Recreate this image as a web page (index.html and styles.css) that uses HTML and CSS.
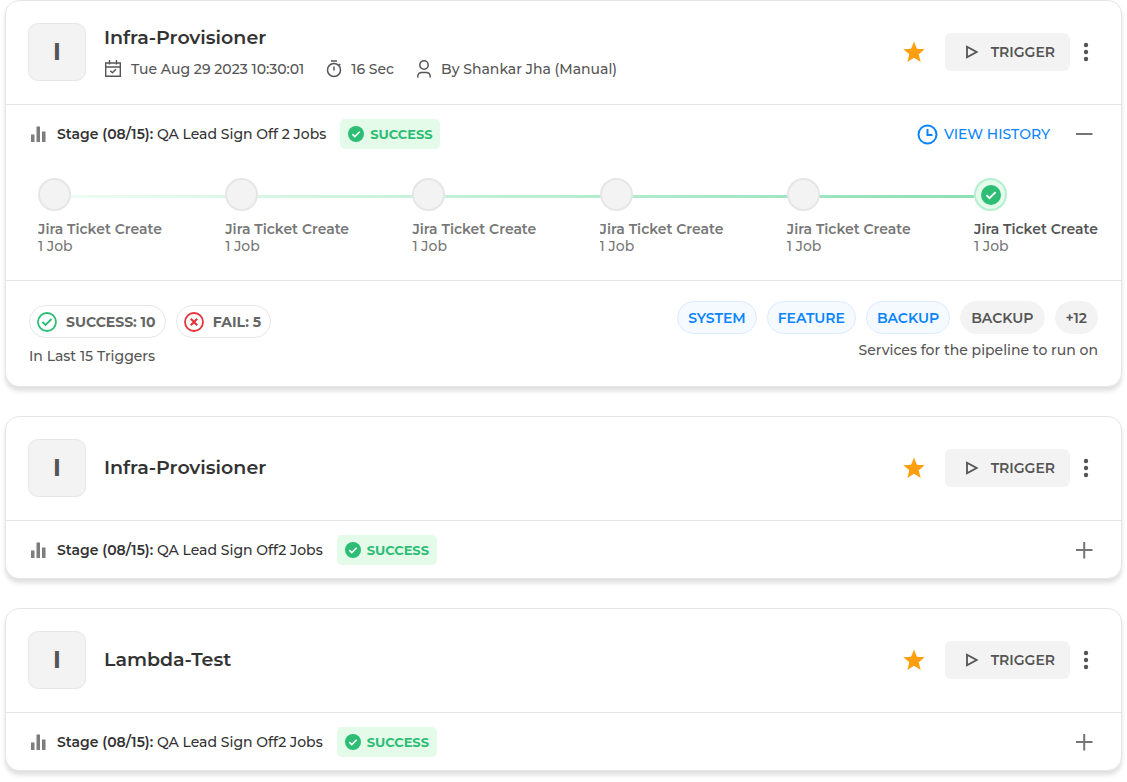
FILE: index.html
```html
<!DOCTYPE html>
<html lang="en">
<head>
    <meta charset="UTF-8">
    <meta name="viewport" content="width=device-width, initial-scale=1.0">
    <title>Pipelines</title>
    <link rel="stylesheet" href="styles.css">
</head>
<body>
    <!-- shared icons -->
    <svg class="sprite" aria-hidden="true">
        <symbol id="icon-star" viewBox="0 0 22 22">
            <path fill="#ff9f0f" d="M11 0.5l2.9 7.3 7.8.5-6 5 2 7.7-6.700-4.200-6.700 4.200 2-7.700-6-5 7.800-.5z"/>
        </symbol>
        <symbol id="icon-play" viewBox="0 0 14 14">
            <path fill="none" stroke="currentColor" stroke-width="1.8" d="M2 1.700v10.600L11.700 7z"/>
        </symbol>
        <symbol id="icon-dots" viewBox="0 0 6 20">
            <circle cx="3" cy="3" r="2.200" fill="currentColor"/>
            <circle cx="3" cy="10" r="2.200" fill="currentColor"/>
            <circle cx="3" cy="17" r="2.200" fill="currentColor"/>
        </symbol>
        <symbol id="icon-bars" viewBox="0 0 16 16">
            <path fill="#7d7d7d" d="M0 8.500h3.500V16H0zM5.500.5H9V16H5.500zM11 5.500h3.500V16H11z"/>
        </symbol>
        <symbol id="icon-check" viewBox="0 0 16 16">
            <circle cx="8" cy="8" r="8" fill="#2dbd75"/>
            <path fill="none" stroke="#fff" stroke-width="1.500" d="M4.300 8.100l2.500 2.500 4.900-4.900"/>
        </symbol>
        <symbol id="icon-plus" viewBox="0 0 18 18">
            <path stroke="#757575" stroke-width="2" d="M1 9h16.500M9.200 1v16.500"/>
        </symbol>
        <symbol id="icon-minus" viewBox="0 0 18 18">
            <path stroke="#757575" stroke-width="2" d="M1 9h16.500"/>
        </symbol>
    </svg>

    <main class="pipelines">
        <article class="card">
            <header class="card-head">
                <div class="avatar">I</div>
                <div class="card-info">
                    <h2>Infra-Provisioner</h2>
                    <ul class="meta">
                        <li>
                            <svg width="18" height="18" viewBox="0 0 18 18" fill="none" stroke="#555" stroke-width="1.400"><path d="M1.700 3h14.600v13.300H1.700zM1.700 7h14.600M5.500 0v4.500M12.500 0v4.500M6.300 10.700l2.100 2 3.500-3.500"/></svg>
                            <span>Tue Aug 29 2023 10:30:01</span>
                        </li>
                        <li>
                            <svg width="16" height="18" viewBox="0 0 16 18" fill="none" stroke="#555" stroke-width="1.500"><circle cx="8" cy="10" r="6.500"/><path d="M5 1h6M8 6.500v4M13 4l1.300 1.300"/></svg>
                            <span>16 Sec</span>
                        </li>
                        <li>
                            <svg width="16" height="18" viewBox="0 0 16 18" fill="none" stroke="#555" stroke-width="1.500"><circle cx="8" cy="5" r="4.200"/><path d="M1.800 17.500v-1.300a3.700 3.700 0 0 1 3.700-3.700h5a3.700 3.700 0 0 1 3.700 3.700v1.300"/></svg>
                            <span>By Shankar Jha (Manual)</span>
                        </li>
                    </ul>
                </div>
                <div class="actions">
                    <button class="icon-btn" aria-label="Favourite"><svg width="22" height="22"><use href="#icon-star"/></svg></button>
                    <button class="trigger"><svg width="14" height="14"><use href="#icon-play"/></svg>TRIGGER</button>
                    <button class="icon-btn" aria-label="More"><svg width="6" height="20"><use href="#icon-dots"/></svg></button>
                </div>
            </header>

            <div class="stage">
                <svg width="16" height="16"><use href="#icon-bars"/></svg>
                <p><b>Stage (08/15):</b> QA Lead Sign Off 2 Jobs</p>
                <span class="badge"><svg width="16" height="16"><use href="#icon-check"/></svg>SUCCESS</span>
                <div class="stage-actions">
                    <a href="#" class="history">
                        <svg width="21" height="21" viewBox="0 0 21 21" fill="none" stroke="#0a84ff" stroke-width="2"><circle cx="10.500" cy="10.500" r="9"/><path d="M10.500 5v6h5"/></svg>
                        VIEW HISTORY
                    </a>
                    <button class="icon-btn" aria-label="Collapse"><svg width="18" height="18"><use href="#icon-minus"/></svg></button>
                </div>
            </div>

            <ol class="steps">
                <li><span class="dot"></span><b>Jira Ticket Create</b>1 Job</li>
                <li><span class="dot"></span><b>Jira Ticket Create</b>1 Job</li>
                <li><span class="dot"></span><b>Jira Ticket Create</b>1 Job</li>
                <li><span class="dot"></span><b>Jira Ticket Create</b>1 Job</li>
                <li><span class="dot"></span><b>Jira Ticket Create</b>1 Job</li>
                <li class="done"><span class="dot"><svg width="20" height="20"><use href="#icon-check"/></svg></span><b>Jira Ticket Create</b>1 Job</li>
            </ol>

            <footer class="card-foot">
                <div class="results">
                    <div class="pills">
                        <span class="pill">
                            <svg width="20" height="20" viewBox="0 0 20 20" fill="none" stroke="#2dbd75" stroke-width="1.800"><circle cx="10" cy="10" r="9"/><path d="M5.500 10l3 3 6-6"/></svg>
                            SUCCESS: 10
                        </span>
                        <span class="pill">
                            <svg width="20" height="20" viewBox="0 0 20 20" fill="none" stroke="#e5353a" stroke-width="1.800"><circle cx="10" cy="10" r="9"/><path stroke-width="2.200" d="M6.800 6.800l6.400 6.400M13.200 6.800l-6.400 6.400"/></svg>
                            FAIL: 5
                        </span>
                    </div>
                    <p>In Last 15 Triggers</p>
                </div>
                <div class="services">
                    <div class="tags">
                        <span class="tag blue">SYSTEM</span>
                        <span class="tag blue">FEATURE</span>
                        <span class="tag blue">BACKUP</span>
                        <span class="tag">BACKUP</span>
                        <span class="tag">+12</span>
                    </div>
                    <p>Services for the pipeline to run on</p>
                </div>
            </footer>
        </article>

        <article class="card">
            <header class="card-head">
                <div class="avatar">I</div>
                <div class="card-info">
                    <h2>Infra-Provisioner</h2>
                </div>
                <div class="actions">
                    <button class="icon-btn" aria-label="Favourite"><svg width="22" height="22"><use href="#icon-star"/></svg></button>
                    <button class="trigger"><svg width="14" height="14"><use href="#icon-play"/></svg>TRIGGER</button>
                    <button class="icon-btn" aria-label="More"><svg width="6" height="20"><use href="#icon-dots"/></svg></button>
                </div>
            </header>
            <div class="stage">
                <svg width="16" height="16"><use href="#icon-bars"/></svg>
                <p><b>Stage (08/15):</b> QA Lead Sign Off2 Jobs</p>
                <span class="badge"><svg width="16" height="16"><use href="#icon-check"/></svg>SUCCESS</span>
                <div class="stage-actions">
                    <button class="icon-btn" aria-label="Expand"><svg width="18" height="18"><use href="#icon-plus"/></svg></button>
                </div>
            </div>
        </article>

        <article class="card">
            <header class="card-head">
                <div class="avatar">I</div>
                <div class="card-info">
                    <h2>Lambda-Test</h2>
                </div>
                <div class="actions">
                    <button class="icon-btn" aria-label="Favourite"><svg width="22" height="22"><use href="#icon-star"/></svg></button>
                    <button class="trigger"><svg width="14" height="14"><use href="#icon-play"/></svg>TRIGGER</button>
                    <button class="icon-btn" aria-label="More"><svg width="6" height="20"><use href="#icon-dots"/></svg></button>
                </div>
            </header>
            <div class="stage">
                <svg width="16" height="16"><use href="#icon-bars"/></svg>
                <p><b>Stage (08/15):</b> QA Lead Sign Off2 Jobs</p>
                <span class="badge"><svg width="16" height="16"><use href="#icon-check"/></svg>SUCCESS</span>
                <div class="stage-actions">
                    <button class="icon-btn" aria-label="Expand"><svg width="18" height="18"><use href="#icon-plus"/></svg></button>
                </div>
            </div>
        </article>
    </main>
</body>
</html>
```
FILE: styles.css
```css
:root {
    --border: #e6e6e6;
    --text: #333333;
    --text-soft: #555555;
    --text-muted: #777777;
    --grey-bg: #f3f3f3;
    --blue: #0a84ff;
    --green: #2dbd75;
    --green-bg: #e4fbea;
}

* {
    box-sizing: border-box;
}

body {
    margin: 0;
    background: #ffffff;
    color: var(--text);
    font-family: Montserrat, Inter, sans-serif;
    font-size: 14px;
    font-weight: 500;
    line-height: 20px;
}

h2, p, ul, ol {
    margin: 0;
    padding: 0;
    list-style: none;
}

b {
    font-weight: 600;
}

svg {
    display: block;
    flex: none;
}

button {
    border: none;
    padding: 0;
    background: none;
    color: var(--text-soft);
    font: inherit;
    cursor: pointer;
}

.sprite {
    display: none;
}

.pipelines {
    display: flex;
    flex-direction: column;
    gap: 29px;
    padding: 0 5px 8px;
}

.card {
    border: 1px solid var(--border);
    border-radius: 14px;
    background: #ffffff;
    box-shadow: 0 4px 4px rgba(0, 0, 0, 0.13);
}

/* header */
.card-head {
    display: flex;
    align-items: center;
    gap: 18px;
    padding: 22px 32px 23px 22px;
    border-bottom: 1px solid var(--border);
}

.avatar {
    display: flex;
    align-items: center;
    justify-content: center;
    width: 58px;
    height: 58px;
    border: 1px solid var(--border);
    border-radius: 10px;
    background: var(--grey-bg);
    color: var(--text-soft);
    font-size: 24px;
    font-weight: 700;
}

.card-info {
    display: flex;
    flex-direction: column;
    gap: 9px;
}

h2 {
    font-size: 19px;
    font-weight: 600;
    line-height: 24px;
}

.meta {
    display: flex;
    gap: 22px;
    color: var(--text-soft);
}

.meta li {
    display: flex;
    align-items: center;
    gap: 9px;
}

.actions {
    display: flex;
    align-items: center;
    margin-left: auto;
}

.icon-btn {
    display: flex;
}

.trigger {
    display: flex;
    align-items: center;
    justify-content: flex-end;
    gap: 12px;
    width: 125px;
    height: 38px;
    margin: 0 13px 0 20px;
    padding-right: 15px;
    border-radius: 6px;
    background: var(--grey-bg);
    font-weight: 600;
}

/* stage row */
.stage {
    display: flex;
    align-items: center;
    gap: 10px;
    padding: 14px 28px 13px 25px;
}

.badge {
    display: flex;
    align-items: center;
    gap: 6px;
    height: 30px;
    margin-left: 4px;
    padding: 0 8px;
    border-radius: 5px;
    background: var(--green-bg);
    color: var(--green);
    font-size: 13px;
    font-weight: 700;
}

.stage-actions {
    display: flex;
    align-items: center;
    gap: 25px;
    margin-left: auto;
}

.history {
    display: flex;
    align-items: center;
    gap: 6px;
    color: var(--blue);
    text-decoration: none;
}

/* steps, the track runs behind the dots */
.steps {
    display: flex;
    margin: 16px 22px 25px 32px;
    background: linear-gradient(90deg, #f0fdf4, #8be0b4) no-repeat 0 17px / calc(100% - 125px) 3px;
    color: var(--text-muted);
    line-height: 17px;
}

.steps li {
    flex: 1;
    overflow: hidden;
    white-space: nowrap;
}

.steps b {
    display: block;
}

.steps .done {
    flex: 0 0 125px;
}

.dot {
    display: flex;
    align-items: center;
    justify-content: center;
    width: 33px;
    height: 33px;
    margin-bottom: 10px;
    border: 2px solid var(--border);
    border-radius: 50%;
    background: var(--grey-bg);
}

.done .dot {
    border-color: #b5efd0;
    background: var(--green-bg);
}

.done b {
    color: var(--text-soft);
}

/* footer */
.card-foot {
    display: flex;
    justify-content: space-between;
    padding: 20px 23px;
    border-top: 1px solid var(--border);
    color: var(--text-soft);
}

.results {
    padding-top: 4px;
}

.pills,
.tags {
    display: flex;
    gap: 10px;
}

.pill,
.tag {
    display: flex;
    align-items: center;
    height: 33px;
    border-radius: 17px;
    font-weight: 600;
}

.pill {
    gap: 9px;
    padding: 0 9px 0 7px;
    border: 1px solid var(--border);
    color: #666666;
    font-weight: 700;
}

.results p {
    margin-top: 8px;
}

.tag {
    padding: 0 10px;
    border: 1px solid var(--grey-bg);
    background: var(--grey-bg);
}

.tag.blue {
    border-color: #dcebff;
    background: #f4faff;
    color: var(--blue);
}

.services p {
    margin-top: 6px;
    text-align: right;
}
```
